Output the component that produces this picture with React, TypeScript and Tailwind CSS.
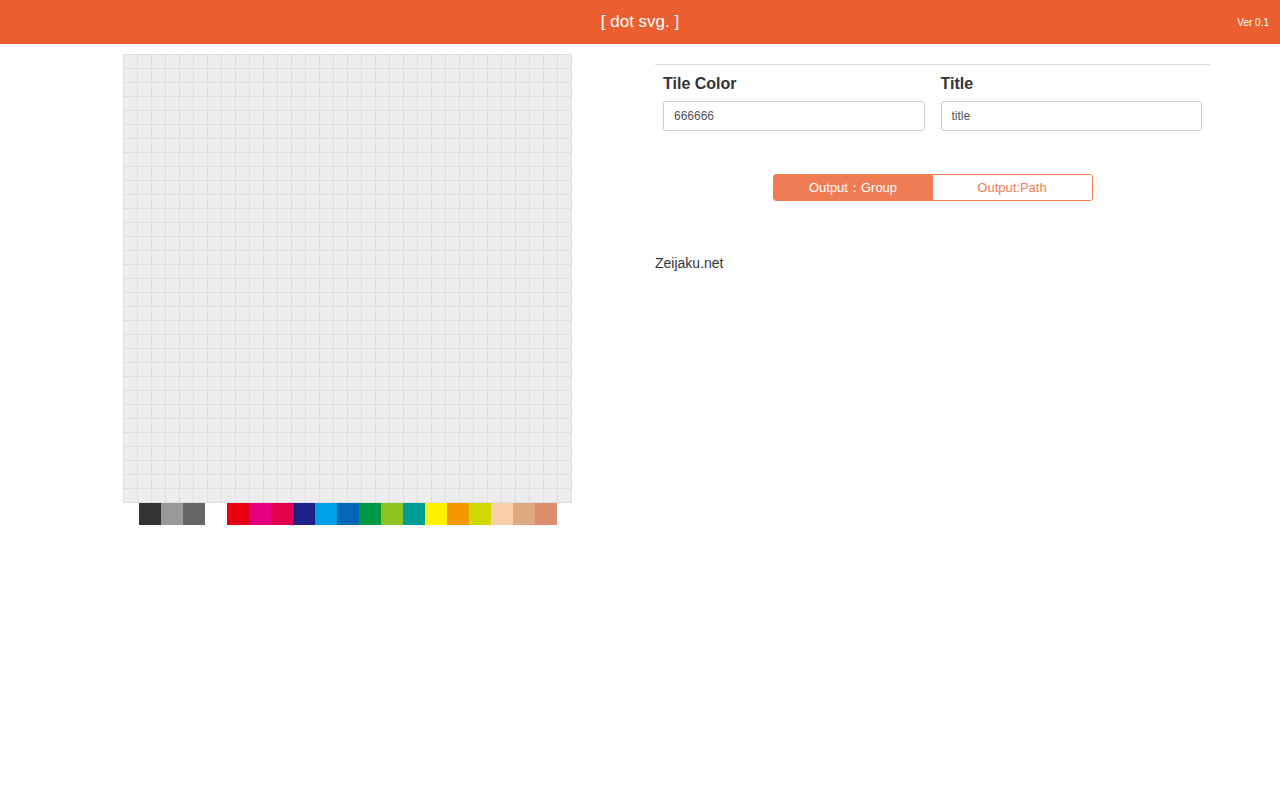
import React from "react";

const palette = [
  "#333333", "#999999", "#666666", "#ffffff", "#e60012", "#e4007f", "#e5004f",
  "#1d2088", "#00a0e9", "#0068b7", "#009944", "#8fc31f", "#009e96", "#fff100",
  "#f39800", "#cfdb00", "#f7cfa8", "#dea882", "#dd8e6a",
];

export default function App() {
  const cells = Array.from({ length: 32 * 32 });
  return (
    <div className="min-h-[800px] bg-white text-[#333] font-['Liberation_Sans',Arial,sans-serif]">
      <header className="relative h-[44px] bg-[#eb5e30] flex items-center justify-center">
        <span className="text-white text-[17px]">[ dot svg. ]</span>
        <span className="absolute right-[11px] top-[15px] text-white text-[10px]">Ver 0.1</span>
      </header>
      <div className="w-[1170px] mx-auto flex">
        <div className="w-[585px] px-[15px] pt-[10px] flex flex-col items-center">
          <div className="grid grid-cols-[repeat(32,13px)] gap-px p-px bg-[#dedede]">
            {cells.map((_, i) => (
              <div key={i} className="w-[13px] h-[13px] bg-[#ededed]" />
            ))}
          </div>
          <div className="flex">
            {palette.map((c) => (
              <div key={c} className="w-[22px] h-[22px]" style={{ backgroundColor: c }} />
            ))}
          </div>
        </div>
        <div className="w-[585px] px-[15px] pt-[20px]">
          <div className="border-t border-[#dddddd]" />
          <div className="flex pt-[9px]">
            <div className="flex-1 px-[8px]">
              <div className="font-bold text-[16px] leading-[20px] text-[#333]">Tile Color</div>
              <input
                defaultValue="666666"
                className="mt-[7px] w-full h-[30px] border border-[#cccccc] rounded-[3px] px-[10px] text-[12px] text-[#555] outline-none"
              />
            </div>
            <div className="flex-1 px-[8px]">
              <div className="font-bold text-[16px] leading-[20px] text-[#333]">Title</div>
              <input
                defaultValue="title"
                className="mt-[7px] w-full h-[30px] border border-[#cccccc] rounded-[3px] px-[10px] text-[12px] text-[#555] outline-none"
              />
            </div>
          </div>
          <div className="flex justify-center mt-[43px]">
            <div className="flex w-[320px] h-[27px] border border-[#ef7c52] rounded-[3px] overflow-hidden text-[13px]">
              <div className="flex-1 bg-[#ef7c52] text-white flex items-center justify-center pt-px">Output：Group</div>
              <div className="flex-1 bg-white text-[#ef7c52] flex items-center justify-center pt-px">Output:Path</div>
            </div>
          </div>
          <div className="mt-[52px] text-[14px] text-[#333]">Zeijaku.net</div>
        </div>
      </div>
    </div>
  );
}
